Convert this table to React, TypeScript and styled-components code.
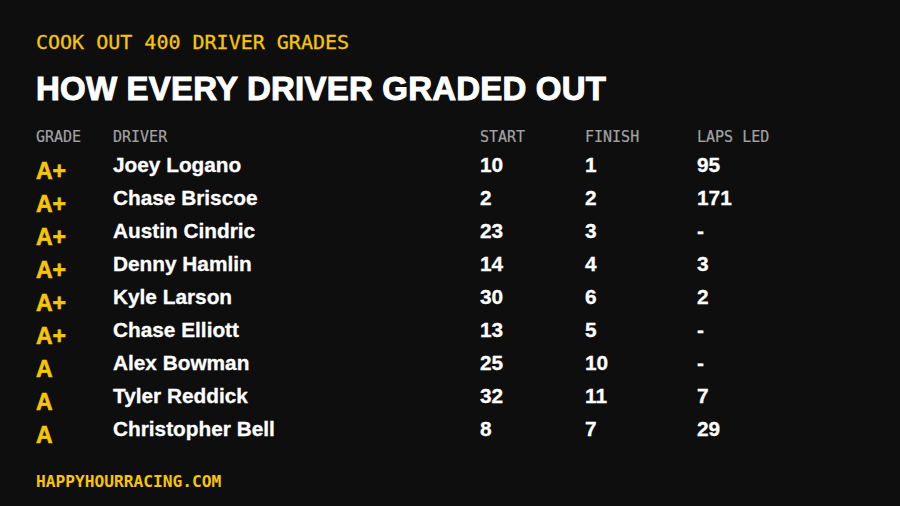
import React from "react";
import styled, { createGlobalStyle } from "styled-components";

const Global = createGlobalStyle`
  html, body { margin: 0; padding: 0; background: #0e0e0e; }
  #root { width: 900px; height: 506px; }
`;

const Page = styled.div`
  width: 900px;
  height: 506px;
  box-sizing: border-box;
  background: #0e0e0e;
  padding: 30px 36px 0 36px;
  display: flex;
  flex-direction: column;
`;

const Kicker = styled.div`
  font-family: "DejaVu Sans Mono", "Liberation Mono", monospace;
  font-size: 20px;
  line-height: 24px;
  color: #f7c600;
  -webkit-text-stroke: 0.3px #f7c600;
`;

const Title = styled.h1`
  margin: 15px 0 0 0;
  font-family: "Liberation Sans", Arial, sans-serif;
  font-weight: 700;
  font-size: 33px;
  line-height: 40px;
  color: #ffffff;
  -webkit-text-stroke: 1px #ffffff;
  letter-spacing: 0.2px;
`;

const Table = styled.div`
  margin-top: 19px;
  display: grid;
  grid-template-columns: 77px 367px 105px 112px 1fr;
  grid-auto-rows: 33px;
  grid-template-rows: 20px;
`;

const Head = styled.div`
  font-family: "DejaVu Sans Mono", "Liberation Mono", monospace;
  font-size: 15px;
  line-height: 18px;
  color: #a2a2a2;
  -webkit-text-stroke: 0.2px #a2a2a2;
`;

const Grade = styled.div`
  font-family: "Liberation Sans", Arial, sans-serif;
  font-weight: 700;
  font-size: 23px;
  line-height: 33px;
  color: #f7c600;
  -webkit-text-stroke: 0.6px #f7c600;
  padding-top: 7px;
`;

const Cell = styled.div`
  font-family: "Liberation Sans", Arial, sans-serif;
  font-weight: 700;
  font-size: 20.8px;
  line-height: 33px;
  color: #ffffff;
  -webkit-text-stroke: 0.3px #ffffff;
`;

const Footer = styled.div`
  margin-top: auto;
  margin-bottom: 13px;
  font-family: "DejaVu Sans Mono", "Liberation Mono", monospace;
  font-weight: 700;
  font-size: 16.2px;
  line-height: 22px;
  color: #f7c600;
`;

const rows = [
  ["A+", "Joey Logano", "10", "1", "95"],
  ["A+", "Chase Briscoe", "2", "2", "171"],
  ["A+", "Austin Cindric", "23", "3", "-"],
  ["A+", "Denny Hamlin", "14", "4", "3"],
  ["A+", "Kyle Larson", "30", "6", "2"],
  ["A+", "Chase Elliott", "13", "5", "-"],
  ["A", "Alex Bowman", "25", "10", "-"],
  ["A", "Tyler Reddick", "32", "11", "7"],
  ["A", "Christopher Bell", "8", "7", "29"],
];

export default function App() {
  return (
    <>
      <Global />
      <Page>
        <Kicker>COOK OUT 400 DRIVER GRADES</Kicker>
        <Title>HOW EVERY DRIVER GRADED OUT</Title>
        <Table>
          <Head>GRADE</Head>
          <Head>DRIVER</Head>
          <Head>START</Head>
          <Head>FINISH</Head>
          <Head>LAPS LED</Head>
          {rows.map((r, i) => (
            <React.Fragment key={i}>
              <Grade>{r[0]}</Grade>
              <Cell>{r[1]}</Cell>
              <Cell>{r[2]}</Cell>
              <Cell>{r[3]}</Cell>
              <Cell>{r[4]}</Cell>
            </React.Fragment>
          ))}
        </Table>
        <Footer>HAPPYHOURRACING.COM</Footer>
      </Page>
    </>
  );
}
